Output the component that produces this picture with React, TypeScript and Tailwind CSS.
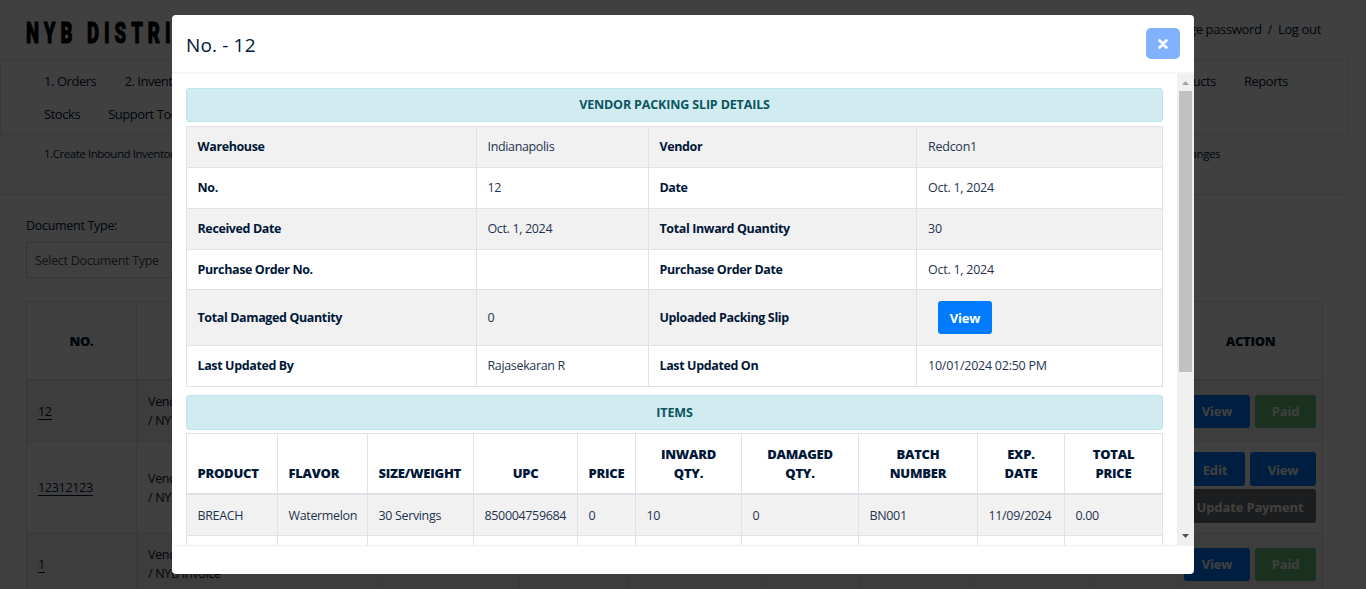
import React from "react";

const detailRows: { h: string; striped: boolean; cells: [string, string, string, string] }[] = [
  { h: "h-[41px]", striped: true, cells: ["Warehouse", "Indianapolis", "Vendor", "Redcon1"] },
  { h: "h-[41px]", striped: false, cells: ["No.", "12", "Date", "Oct. 1, 2024"] },
  { h: "h-[41px]", striped: true, cells: ["Received Date", "Oct. 1, 2024", "Total Inward Quantity", "30"] },
  { h: "h-[40px]", striped: false, cells: ["Purchase Order No.", "", "Purchase Order Date", "Oct. 1, 2024"] },
  { h: "h-[56px]", striped: true, cells: ["Total Damaged Quantity", "0", "Uploaded Packing Slip", "@view"] },
  { h: "h-[41px]", striped: false, cells: ["Last Updated By", "Rajasekaran R", "Last Updated On", "10/01/2024 02:50 PM"] },
];

const itemHeads = ["PRODUCT", "FLAVOR", "SIZE/WEIGHT", "UPC", "PRICE", "INWARD QTY.", "DAMAGED QTY.", "BATCH NUMBER", "EXP. DATE", "TOTAL PRICE"];
const itemRow = ["BREACH", "Watermelon", "30 Servings", "850004759684", "0", "10", "0", "BN001", "11/09/2024", "0.00"];
const itemCols = "grid grid-cols-[91px_90px_106px_104px_58px_106px_117px_119px_87px_98px]";
const pageCols = "grid grid-cols-[110px_246px_137px_109px_137px_95px_110px_123px_85px_144px]";

function Banner({ children }: { children: React.ReactNode }) {
  return (
    <div className="flex shrink-0 items-center justify-center rounded-[3px] border border-[#bee5eb] bg-[#d1ecf1] pt-px text-[12.5px] font-bold tracking-[-0.15px] text-[#0c5460]">
      {children}
    </div>
  );
}

function Btn({ className, children }: { className: string; children: React.ReactNode }) {
  return (
    <span className={`flex items-center justify-center rounded-[3px] pt-[2px] text-[13px] font-bold tracking-[-0.15px] text-white ${className}`}>
      {children}
    </span>
  );
}

function PageRow({ className, no, action }: { className: string; no: string; action: React.ReactNode }) {
  return (
    <div className={`${pageCols} ${className} border-l border-[#dee2e6]`}>
      <div className="flex items-center border-r border-b border-[#dee2e6] pt-[2px] pl-[11px]">
        <span className="border-b border-[#001737] leading-[14px]">{no}</span>
      </div>
      <div className="flex items-center border-r border-b border-[#dee2e6] pl-[11px] leading-[19px]">
        <span>
          Vendor
          <br />/ NYB Invoice
        </span>
      </div>
      {[0, 1, 2, 3, 4, 5, 6].map((i) => (
        <div key={i} className="border-r border-b border-[#dee2e6]" />
      ))}
      <div className="flex flex-col items-end justify-center gap-[3px] border-r border-b border-[#dee2e6] pr-[6px]">{action}</div>
    </div>
  );
}

function Page() {
  return (
    <div className="h-full w-full bg-white">
      <div className="flex h-[60px] items-center justify-between pr-[45px] pl-[26px]">
        <div className="mt-[5px] origin-left scale-x-[0.62] font-['Roboto'] text-[30px] leading-none font-black tracking-[8px] whitespace-nowrap text-black [-webkit-text-stroke:1px_black]">
          NYB DISTRI
        </div>
        <div className="flex gap-[6px] text-[13px] tracking-[-0.35px]">
          <span>Change password</span>
          <span>/</span>
          <span>Log out</span>
        </div>
      </div>
      <div className="mr-[17px] h-[75px] border border-[#dee2e6] pt-[4px] text-[13px] tracking-[-0.45px]">
        <div className="flex h-[33px] items-center justify-between pr-[60px] pl-[43px]">
          <div className="flex gap-[28px]">
            <span>1. Orders</span>
            <span>2. Inventory</span>
          </div>
          <div className="flex gap-[28px]">
            <span>Products</span>
            <span>Reports</span>
          </div>
        </div>
        <div className="flex h-[33px] items-center gap-[28px] pl-[43px]">
          <span>Stocks</span>
          <span>Support Tools</span>
        </div>
      </div>
      <div className="mr-[17px] flex h-[60px] justify-between border-b border-[#dee2e6] pt-[10px] pr-[129px] pl-[44px] text-[11.5px] tracking-[-0.45px]">
        <span>1.Create Inbound Inventory</span>
        <span>Changes</span>
      </div>
      <div className="pt-[22px] pl-[26px] text-[12.5px] tracking-[-0.3px]">
        <div className="h-[25px] leading-[18px]">Document Type:</div>
        <div className="flex h-[36px] w-[260px] items-center rounded-[3px] border border-[#ced4da] pt-[2px] pl-[8px] text-[#495057]">Select Document Type</div>
      </div>
      <div className="mt-[23px] ml-[26px] w-[1297px] text-[12.5px] tracking-[-0.3px]">
        <div className={`${pageCols} h-[80px] border-t border-l border-[#dee2e6] text-[13px] font-extrabold`}>
          {["NO.", "DOCUMENT", "", "", "", "", "", "", "", "ACTION"].map((t, i) => (
            <div key={i} className="flex items-center justify-center border-r border-b-2 border-[#dee2e6] pt-[3px]">
              {t}
            </div>
          ))}
        </div>
        <PageRow
          className="h-[61px] bg-[#f2f2f2]"
          no="12"
          action={
            <div className="flex gap-[5px]">
              <Btn className="h-[33px] w-[66px] bg-[#007bff]">View</Btn>
              <Btn className="h-[33px] w-[61px] bg-[#28a745] opacity-65">Paid</Btn>
            </div>
          }
        />
        <PageRow
          className="h-[92px]"
          no="12312123"
          action={
            <>
              <div className="flex gap-[5px]">
                <Btn className="h-[34px] w-[60px] bg-[#007bff] pt-[3px]">Edit</Btn>
                <Btn className="h-[34px] w-[66px] bg-[#007bff] pt-[3px]">View</Btn>
              </div>
              <Btn className="h-[34px] w-[132px] bg-[#6c757d] pt-[3px]">Update Payment</Btn>
            </>
          }
        />
        <PageRow
          className="h-[61px] bg-[#f2f2f2]"
          no="1"
          action={
            <div className="flex gap-[5px]">
              <Btn className="h-[33px] w-[66px] bg-[#007bff]">View</Btn>
              <Btn className="h-[33px] w-[61px] bg-[#28a745] opacity-65">Paid</Btn>
            </div>
          }
        />
      </div>
    </div>
  );
}

function Modal() {
  return (
    <div className="flex h-[559px] w-[1022px] flex-col overflow-hidden rounded-[4px] bg-white">
      <div className="flex h-[59px] shrink-0 items-center justify-between border-b-2 border-[#f5f6f7] pr-[14px] pl-[14px]">
        <h5 className="pt-[4px] text-[19px] font-normal tracking-[0.15px]">No. - 12</h5>
        <button className="flex h-[31px] w-[34px] items-center justify-center rounded-[5px] bg-[#80b1ff]">
          <svg width="10" height="10" viewBox="0 0 10 10" stroke="white" strokeWidth="2.8" strokeLinecap="round">
            <path d="M1.6 1.6 8.4 8.4M8.4 1.6 1.6 8.4" />
          </svg>
        </button>
      </div>
      <div className="flex h-[471px] shrink-0">
        <div className="flex h-full w-[1005px] flex-col overflow-hidden pt-[14px] pr-[14px] pl-[14px]">
          <div className="grid h-[34px] shrink-0">
            <Banner>VENDOR PACKING SLIP DETAILS</Banner>
          </div>
          <div className="mt-[4px] shrink-0 border-t border-l border-[#dee2e6] text-[12.5px]">
            {detailRows.map((r) => (
              <div key={r.cells[0]} className={`grid grid-cols-[290px_172px_268px_246px] ${r.h} ${r.striped ? "bg-[#f1f1f1]" : "bg-white"}`}>
                {r.cells.map((c, i) => (
                  <div
                    key={i}
                    className={`flex items-center border-r border-b border-[#dee2e6] ${r.h === "h-[41px]" || c === "@view" ? "" : "pt-px"} ${i % 2 === 0 ? "pl-[10.500px] font-bold tracking-[-0.38px]" : i === 3 ? "pl-[11px] tracking-[-0.25px] text-[#1f3350]" : "pl-[10.500px] tracking-[-0.35px] text-[#1f3350]"}`}
                  >
                    {c === "@view" ? <Btn className="ml-[10px] h-[33px] w-[54px] bg-[#007bff]">View</Btn> : c}
                  </div>
                ))}
              </div>
            ))}
          </div>
          <div className="mt-[8px] grid h-[35px] shrink-0">
            <Banner>ITEMS</Banner>
          </div>
          <div className="mt-[3px] shrink-0 border-t border-l border-[#dee2e6] text-[12.5px]">
            <div className={`${itemCols} h-[61px] text-[13px] leading-[19px] font-extrabold tracking-[-0.25px]`}>
              {itemHeads.map((t, i) => (
                <div
                  key={i}
                  className={`flex items-end border-r border-b-2 border-[#dee2e6] pb-[10px] text-center ${i < 3 || i === 4 ? "justify-start pl-[10.500px]" : "justify-center px-[20px]"}`}
                >
                  {t}
                </div>
              ))}
            </div>
            <div className={`${itemCols} h-[41px] bg-[#f1f1f1]`}>
              {itemRow.map((t, i) => (
                <div key={i} className="flex items-center border-r border-b border-[#dee2e6] pt-[2px] pl-[10.500px] tracking-[-0.35px] whitespace-nowrap text-[#1f3350]">
                  {t}
                </div>
              ))}
            </div>
            <div className={`${itemCols} h-[41px]`}>
              {itemRow.map((_, i) => (
                <div key={i} className="border-r border-b border-[#dee2e6]" />
              ))}
            </div>
          </div>
        </div>
        <div className="flex h-full w-[17px] flex-col items-center bg-[#f0f0f0]">
          <svg width="17" height="17" viewBox="0 0 17 17" className="shrink-0">
            <path d="M5 11h7L8.5 7z" fill="#a3a3a3" />
          </svg>
          <div className="h-[281px] w-[13px] bg-[#c1c1c1]" />
          <svg width="17" height="17" viewBox="0 0 17 17" className="mt-auto shrink-0">
            <path d="M5 6h7l-3.500 4z" fill="#505050" />
          </svg>
        </div>
      </div>
      <div className="flex-1 border-t border-[#eef0f2]" />
    </div>
  );
}

export default function App() {
  return (
    <div className="relative h-[589px] w-[1366px] overflow-hidden font-['Open_Sans','Noto_Sans',sans-serif] text-[#001737]">
      <Page />
      <div className="absolute inset-0 flex justify-center bg-black/75 pt-[15px]">
        <Modal />
      </div>
    </div>
  );
}
